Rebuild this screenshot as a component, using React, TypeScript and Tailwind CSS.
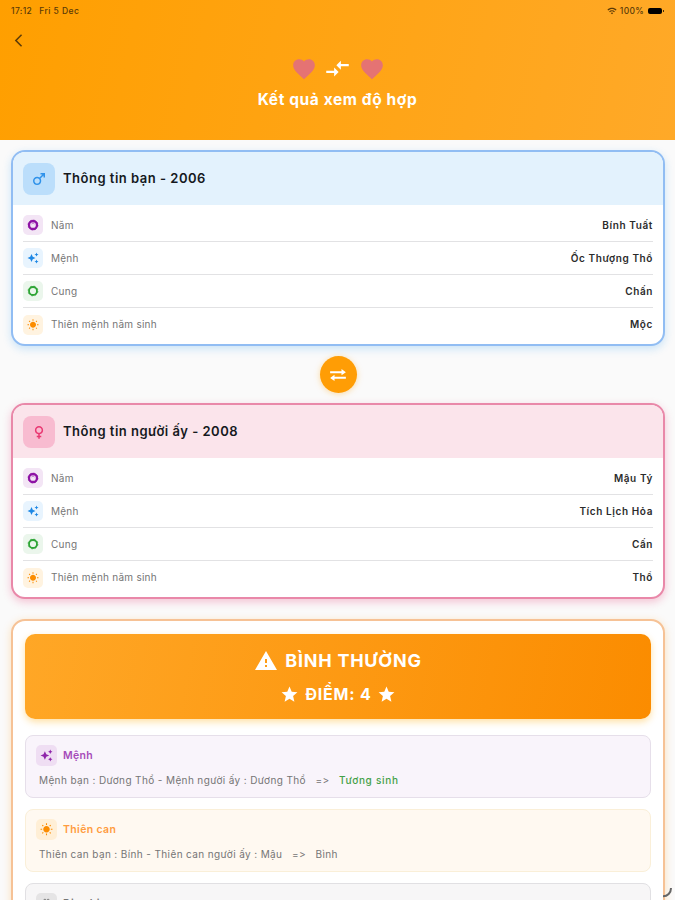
import React from 'react';
import {
  MdArrowBackIosNew,
  MdAutoAwesome,
  MdCompareArrows,
  MdFavorite,
  MdFemale,
  MdMale,
  MdPets,
  MdStar,
  MdWarning,
  MdWbSunny,
  MdWifi
} from 'react-icons/md';

interface InfoCardProps {
  title: string;
  icon: React.ReactNode;
  values: string[];
  cardClass: string;
  headClass: string;
  iconClass: string;
}

const RingIcon: React.FC<{ notched?: boolean }> = ({ notched }) => (
  <svg width="12" height="12" viewBox="0 0 12 12" fill="none" stroke="currentColor">
    <circle cx="6" cy="6" r="4" strokeWidth={notched ? 2.3 : 1.8} />
    <circle cx="6" cy="6" r="4.9" strokeWidth="0.7" strokeDasharray="1.9 1.95" />
    {notched && <path d="M4.6 4.9 6 3.8l1.4 1.1" strokeWidth="0.6" />}
  </svg>
);

const SwapIcon = () => (
  <svg width="18" height="14" viewBox="0 0 20 16" fill="currentColor">
    <path d="M1 3.6h13V1.2L19 4.8l-5 3.6V6H1z" />
    <path d="M19 10H6V7.8l-5 3.5 5 3.5v-2.4h13z" />
  </svg>
);

const ROWS = [
  { label: 'Năm', icon: <RingIcon notched />, color: 'bg-[#f3e5f5] text-[#8e13a5]' },
  { label: 'Mệnh', icon: <MdAutoAwesome size={12} />, color: 'bg-[#e8f4fe] text-[#1e88e5]' },
  { label: 'Cung', icon: <RingIcon />, color: 'bg-[#ebf6ec] text-[#2fa536]' },
  { label: 'Thiên mệnh năm sinh', icon: <MdWbSunny size={12} />, color: 'bg-[#fff3e0] text-[#fb8c00]' }
];

const InfoCard: React.FC<InfoCardProps> = ({ title, icon, values, cardClass, headClass, iconClass }) => (
  <section className={`h-[196px] overflow-hidden rounded-[14px] border-2 bg-white ${cardClass}`}>
    <div className={`flex h-[53px] items-center gap-2 px-[10px] ${headClass}`}>
      <div className={`flex size-8 items-center justify-center rounded-lg ${iconClass}`}>{icon}</div>
      <h2 className="text-[13px] font-semibold tracking-[0.5px] text-[#15191d]">{title}</h2>
    </div>
    <div className="px-[10px] pt-[4px]">
      {ROWS.map((row, idx) => (
        <div
          key={row.label}
          className={`flex h-[33px] items-center ${idx < ROWS.length - 1 ? 'border-b border-[#e2e2e4]' : ''}`}
        >
          <div className={`flex size-5 items-center justify-center rounded-[5px] ${row.color}`}>{row.icon}</div>
          <span className="ml-2 text-[10px] tracking-[0.25px] text-[#757575]">{row.label}</span>
          <span className="ml-auto text-[10px] font-semibold tracking-[0.6px] text-[#2b2b2b]">{values[idx]}</span>
        </div>
      ))}
    </div>
  </section>
);

interface DetailBoxProps {
  title: string;
  icon: React.ReactNode;
  boxClass: string;
  iconClass: string;
  titleClass: string;
  children?: React.ReactNode;
}

const DetailBox: React.FC<DetailBoxProps> = ({ title, icon, boxClass, iconClass, titleClass, children }) => (
  <div className={`h-[63px] rounded-lg border px-[10px] pt-[9px] ${boxClass}`}>
    <div className="flex items-center gap-[6px]">
      <div className={`flex size-[21px] items-center justify-center rounded-[5px] ${iconClass}`}>{icon}</div>
      <h3 className={`text-[10.5px] font-semibold tracking-[0.35px] ${titleClass}`}>{title}</h3>
    </div>
    <p className="mt-[7px] ml-[3px] text-[10px] leading-[15px] tracking-[0.38px] whitespace-pre text-[#757575]">{children}</p>
  </div>
);

export default function App() {
  return (
    <div className="relative flex h-[900px] w-[675px] flex-col overflow-hidden bg-[#fafafa] font-['Inter','Noto_Sans',sans-serif]">
      {/* Header */}
      <header className="h-[140px] shrink-0 bg-[linear-gradient(102deg,#ff9f00,#ffa928)] text-white">
        <div className="flex h-[22px] items-center px-[11px] text-[8.5px] font-medium text-[#5a3a08]">
          <span className="tracking-[0.35px]">17:12</span>
          <span className="ml-[7px] tracking-[0.45px]">Fri 5 Dec</span>
          <MdWifi size={10} className="ml-auto" />
          <span className="ml-[3px] tracking-[0.3px]">100%</span>
          <span className="ml-[4px] h-[6px] w-[14px] rounded-[2px] bg-black" />
          <span className="ml-px h-[2px] w-px bg-[#4d3208]" />
        </div>
        <div className="flex h-[36px] items-center pl-[11px] text-[#5f3d08]">
          <MdArrowBackIosNew size={15} />
        </div>
        <div className="-mt-[3px] flex h-[27px] items-center justify-center gap-[8px]">
          <MdFavorite size={26} className="text-[#e57373]" />
          <MdCompareArrows size={27} className="mx-[-0.5px]" />
          <MdFavorite size={26} className="text-[#e57373]" />
        </div>
        <h1 className="mt-[6px] text-center text-[15.5px] leading-[24px] font-bold tracking-[0.6px]">Kết quả xem độ hợp</h1>
      </header>

      <main className="flex flex-col pt-[10px] pr-[10px] pl-[11px]">
        <InfoCard
          title="Thông tin bạn - 2006"
          icon={<MdMale size={18} />}
          values={['Bính Tuất', 'Ốc Thượng Thổ', 'Chấn', 'Mộc']}
          cardClass="border-[#91bdf3] shadow-[0_3px_8px_rgba(33,150,243,0.22)]"
          headClass="bg-[#e3f2fd]"
          iconClass="bg-[#bbdefb] text-[#2f92ea]"
        />

        {/* Swap button */}
        <div className="flex h-[57px] items-center justify-center">
          <button className="flex size-[37px] items-center justify-center rounded-full bg-[#ff9d05] text-white shadow-[0_1px_6px_rgba(255,160,0,0.35)]">
            <SwapIcon />
          </button>
        </div>

        <InfoCard
          title="Thông tin người ấy - 2008"
          icon={<MdFemale size={18} />}
          values={['Mậu Tý', 'Tích Lịch Hỏa', 'Cấn', 'Thổ']}
          cardClass="border-[#e988a9] shadow-[0_3px_8px_rgba(233,30,99,0.25)]"
          headClass="bg-[#fbe4eb]"
          iconClass="bg-[#f8bbd0] text-[#e93872]"
        />

        {/* Result */}
        <section className="mt-[20px] flex h-[320px] flex-col rounded-t-[14px] border-2 border-[#f6c296] bg-white px-[12px] pt-[13px] shadow-[0_2px_9px_rgba(255,152,0,0.25)]">
          <div className="flex h-[85px] shrink-0 flex-col items-center rounded-[10px] bg-[linear-gradient(100deg,#ffa726,#fb8c00)] pt-[13px] text-white shadow-[0_3px_7px_rgba(255,175,20,0.38)]">
            <div className="flex h-[27px] items-center gap-[7px]">
              <MdWarning size={24} />
              <span className="text-[18px] font-bold tracking-[0.75px]">BÌNH THƯỜNG</span>
            </div>
            <div className="mt-[7px] flex h-[26px] items-center gap-[6px]">
              <MdStar size={19} />
              <span className="text-[16px] font-bold tracking-[0.8px]">ĐIỂM: 4</span>
              <MdStar size={19} className="-ml-px" />
            </div>
          </div>

          <div className="mt-[16px] flex flex-col gap-[11px]">
            <DetailBox
              title="Mệnh"
              icon={<MdAutoAwesome size={13} />}
              boxClass="bg-[#f9f4fb] border-[#e6dfea]"
              iconClass="bg-[#efdef3] text-[#8e24aa]"
              titleClass="text-[#a64bb9]"
            >
              Mệnh bạn : Dương Thổ - Mệnh người ấy : Dương Thổ{'   =>   '}
              <span className="font-medium tracking-[0.7px] text-[#43a047]">Tương sinh</span>
            </DetailBox>
            <DetailBox
              title="Thiên can"
              icon={<MdWbSunny size={13} />}
              boxClass="bg-[#fff9f1] border-[#faefd8]"
              iconClass="bg-[#ffefd6] text-[#fb8c00]"
              titleClass="text-[#ff9c3f]"
            >
              Thiên can bạn : Bính - Thiên can người ấy : Mậu{'   =>   '}Bình
            </DetailBox>
            <DetailBox
              title="Địa chi"
              icon={<MdPets size={13} />}
              boxClass="bg-[#f7f6f7] border-[#e1e0e3]"
              iconClass="bg-[#e5e4e5] text-[#8d8d8d]"
              titleClass="text-[#757575]"
            />
          </div>
        </section>
      </main>

      {/* Corner handle */}
      <svg className="absolute right-[2px] bottom-[2px]" width="11" height="12" viewBox="0 0 11 12" fill="none">
        <path d="M1 10.3C5.5 10.3 9 7 9 2" stroke="#666" strokeWidth="2" />
      </svg>
    </div>
  );
}
